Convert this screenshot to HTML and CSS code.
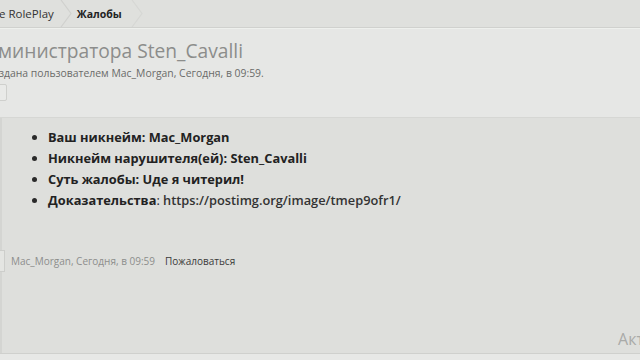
FILE: index.html
```html
<!DOCTYPE html>
<html lang="ru">
<head>
<meta charset="utf-8">
<link rel="stylesheet" href="styles.css">
</head>
<body>
<div class="page">
  <nav class="crumbs">
    <span class="crumb first">e RolePlay</span>
    <svg class="chev" width="12" height="27" viewBox="0 0 12 27"><polyline points="1,0 11,13.5 1,27" fill="none" stroke="#d0d1ce" stroke-width="1.2"/></svg>
    <span class="crumb current">Жалобы</span>
    <svg class="chev" width="12" height="27" viewBox="0 0 12 27"><polyline points="1,0 11,13.5 1,27" fill="none" stroke="#d6d7d4" stroke-width="1.2"/></svg>
  </nav>
  <header class="thread-head">
    <h1 class="title">министратора Sten_Cavalli</h1>
    <p class="meta">здана пользователем Mac_Morgan, Сегодня, в 09:59.</p>
    <div class="tool-btn"></div>
  </header>
  <section class="post">
    <ul class="fields">
      <li><b>Ваш никнейм: Mac_Morgan</b></li>
      <li><b>Никнейм нарушителя(ей): Sten_Cavalli</b></li>
      <li><b>Суть жалобы: Uде я читерил!</b></li>
      <li><b>Доказательства</b>: <span class="link">https://postimg.org/image/tmep9ofr1/</span></li>
    </ul>
    <div class="post-foot">
      <span class="check"></span>
      <span class="author">Mac_Morgan, Сегодня, в 09:59</span>
      <span class="report">Пожаловаться</span>
    </div>
    <div class="activate">Акт</div>
  </section>
  <div class="bottom"></div>
</div>
</body>
</html>
```

FILE: styles.css
```css
html, body {
  margin: 0;
  padding: 0;
  width: 640px;
  height: 360px;
  overflow: hidden;
  background: #e4e5e3;
  font-family: "Open Sans", "Noto Sans", sans-serif;
}
.page {
  display: flex;
  flex-direction: column;
  height: 360px;
}
.crumbs {
  display: flex;
  align-items: center;
  background: #dfe0dd;
  border-bottom: 1px solid #d0d1ce;
  box-sizing: border-box;
  height: 28px;
}
.crumb {
  font-size: 11.5px;
  color: #333;
}
.crumb.first {
  margin-left: -1px;
  padding-right: 6px;
}
.chev {
  flex: none;
}
.crumb.current {
  font-size: 10.5px;
  font-weight: 700;
  color: #222;
  padding: 0 9px 0 5px;
}
.thread-head {
  background: #e6e7e5;
  border-top: 1px solid #eef0ed;
  border-bottom: 1px solid #d6d7d4;
  height: 90px;
  box-sizing: border-box;
  padding-top: 8px;
}
.title {
  margin: 0 0 0 -2px;
  font-size: 19.2px;
  font-weight: 400;
  color: #8c8d8b;
  line-height: 28px;
}
.meta {
  margin: 1px 0 0 -1px;
  font-size: 10.4px;
  color: #6a6b69;
  line-height: 14px;
}
.tool-btn {
  margin: 4px 0 0 -10px;
  width: 15px;
  height: 15px;
  border: 1px solid #cfd0cd;
  background: #e9eae8;
  border-radius: 2px;
}
.post {
  flex: none;
  height: 235px;
  background: #dedfdc;
  border-left: 2px solid #d4d5d2;
  box-sizing: border-box;
  display: flex;
  flex-direction: column;
  position: relative;
}
.fields {
  margin: 9px 0 0;
  padding-left: 46px;
  font-size: 12.8px;
  line-height: 21px;
  color: #2a2a2a;
}
.fields b {
  font-weight: 700;
  color: #222;
}
.link {
  font-weight: 600;
  color: #333;
}
.post-foot {
  display: flex;
  align-items: center;
  margin-top: 39px;
  font-size: 10px;
  height: 22px;
}
.check {
  width: 4px;
  height: 20px;
  border: 1px solid #cdcecb;
  border-left: none;
  background: #e4e5e2;
  margin-left: -2px;
  margin-right: 6px;
}
.author {
  color: #8d8e8c;
}
.report {
  color: #3a3a3a;
  margin-left: 10px;
}
.activate {
  position: absolute;
  right: -4px;
  bottom: 3px;
  font-size: 16px;
  color: #a9aaa8;
}
.bottom {
  flex: 1;
  background: #e7e8e6;
  border-top: 1px solid #cfd0cd;
}
```
